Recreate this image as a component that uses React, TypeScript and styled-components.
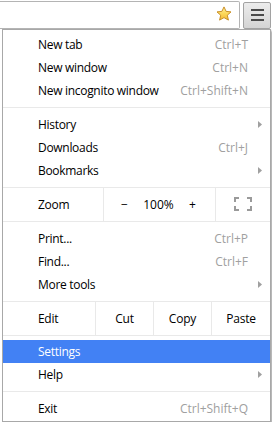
import React from 'react';
import styled, { createGlobalStyle } from 'styled-components';

const GlobalStyle = createGlobalStyle`
	html, body {
		margin: 0;
		padding: 0;
		background: #ffffff;
	}
	body {
		font-family: 'Open Sans', 'Noto Sans', sans-serif;
		font-size: 12px;
		color: #000;
	}
`;

type Item = { label: string; shortcut?: string; submenu?: boolean; active?: boolean };

const groupOne: Item[] = [
	{ label: 'New tab', shortcut: 'Ctrl+T' },
	{ label: 'New window', shortcut: 'Ctrl+N' },
	{ label: 'New incognito window', shortcut: 'Ctrl+Shift+N' }
];

const groupTwo: Item[] = [
	{ label: 'History', submenu: true },
	{ label: 'Downloads', shortcut: 'Ctrl+J' },
	{ label: 'Bookmarks', submenu: true }
];

const groupThree: Item[] = [
	{ label: 'Print...', shortcut: 'Ctrl+P' },
	{ label: 'Find...', shortcut: 'Ctrl+F' },
	{ label: 'More tools', submenu: true }
];

const groupFour: Item[] = [
	{ label: 'Settings', active: true },
	{ label: 'Help', submenu: true }
];

const Star = () => (
	<svg width="16" height="16" viewBox="0 0 16 16">
		<defs>
			<linearGradient id="starFill" x1="0" y1="0" x2="0" y2="1">
				<stop offset="0" stopColor="#fff2a0" />
				<stop offset="0.5" stopColor="#fcd85a" />
				<stop offset="1" stopColor="#f5b935" />
			</linearGradient>
		</defs>
		<path
			d="M8 0.9 L10.1 5.4 L15 5.9 L11.3 9.2 L12.4 14.1 L8 11.6 L3.6 14.1 L4.7 9.2 L1 5.9 L5.9 5.4 Z"
			fill="url(#starFill)"
			stroke="#c98f26"
			strokeWidth="1"
			strokeLinejoin="round"
		/>
	</svg>
);

const FullscreenIcon = () => (
	<svg width="18" height="14" viewBox="0 0 18 14" fill="none" stroke="#9a9a9a" strokeWidth="2">
		<path d="M1 5 V1 H5" />
		<path d="M13 1 H17 V5" />
		<path d="M17 9 V13 H13" />
		<path d="M5 13 H1 V9" />
	</svg>
);

const Arrow = () => (
	<svg width="4" height="7" viewBox="0 0 4 7">
		<path d="M0 0 L4 3.5 L0 7 Z" fill="#a0a0a0" />
	</svg>
);

export default function App() {
	return (
		<>
			<GlobalStyle />
			<Toolbar>
				<AddressBar>
					<Star />
				</AddressBar>
				<MenuButton>
					<Bar />
					<Bar />
					<Bar />
				</MenuButton>
			</Toolbar>
			<Menu>
				{groupOne.map((item) => (
					<MenuRow key={item.label} item={item} />
				))}
				<Separator />
				{groupTwo.map((item) => (
					<MenuRow key={item.label} item={item} />
				))}
				<ButtonRow $after={5}>
					<RowLabel>Zoom</RowLabel>
					<ZoomCell>
						<span>−</span>
						<span>100%</span>
						<span>+</span>
					</ZoomCell>
					<IconCell>
						<FullscreenIcon />
					</IconCell>
				</ButtonRow>
				{groupThree.map((item) => (
					<MenuRow key={item.label} item={item} />
				))}
				<ButtonRow $after={4}>
					<RowLabel $width={93}>Edit</RowLabel>
					<EditCell>Cut</EditCell>
					<EditCell>Copy</EditCell>
					<EditCell $last>Paste</EditCell>
				</ButtonRow>
				{groupFour.map((item) => (
					<MenuRow key={item.label} item={item} />
				))}
				<Separator />
				<MenuRow item={{ label: 'Exit', shortcut: 'Ctrl+Shift+Q' }} />
			</Menu>
		</>
	);
}

const MenuRow: React.FC<{ item: Item }> = ({ item }) => (
	<Row $active={item.active}>
		<Label>{item.label}</Label>
		{item.shortcut && <Shortcut>{item.shortcut}</Shortcut>}
		{item.submenu && (
			<ArrowBox>
				<Arrow />
			</ArrowBox>
		)}
	</Row>
);

const Toolbar = styled.div`
	display: flex;
	align-items: flex-start;
	height: 29px;
	box-sizing: border-box;
	padding-top: 1px;
`;

const AddressBar = styled.div`
	flex: 1;
	height: 28px;
	box-sizing: border-box;
	border: 1px solid #b4b4b4;
	border-left: none;
	border-radius: 0 2px 2px 0;
	background: #ffffff;
	display: flex;
	align-items: center;
	justify-content: flex-end;
	padding-right: 7px;
	padding-bottom: 2px;
`;

const MenuButton = styled.div`
	width: 28px;
	height: 27px;
	margin: 1px 1px 0 3px;
	box-sizing: border-box;
	border: 1px solid #a2a2a2;
	border-radius: 2px;
	background: linear-gradient(#ececec, #d4d4d4);
	display: flex;
	flex-direction: column;
	align-items: center;
	justify-content: center;
	gap: 3px;
	padding-bottom: 1px;
`;

const Bar = styled.div`
	width: 13px;
	height: 2px;
	background: #4a4a4a;
`;

const Menu = styled.div`
	display: flex;
	flex-direction: column;
	margin-left: 2px;
	width: 269px;
	height: 393px;
	box-sizing: border-box;
	border: 1px solid #a8a8a8;
	background: #ffffff;
	padding-top: 3px;
	box-shadow: 2px 2px 2px rgba(0, 0, 0, 0.3);
`;

const Row = styled.div<{ $active?: boolean }>`
	display: flex;
	align-items: center;
	height: 23px;
	flex-shrink: 0;
	padding: 0 22px 0 35px;
	background: ${({ $active }) => ($active ? '#4281f4' : 'transparent')};
	color: ${({ $active }) => ($active ? '#ffffff' : '#000000')};
	position: relative;
`;

const Label = styled.span`
	letter-spacing: -0.3px;
`;

const Shortcut = styled.span`
	margin-left: auto;
	color: #a0a0a0;
`;

const ArrowBox = styled.span`
	position: absolute;
	right: 8px;
	top: 8px;
	display: flex;
`;

const Separator = styled.div`
	height: 1px;
	flex-shrink: 0;
	background: #e9e9e9;
	margin: 5px 0;
`;

const ButtonRow = styled.div<{ $after: number }>`
	display: flex;
	height: 35px;
	flex-shrink: 0;
	box-sizing: border-box;
	border-top: 1px solid #e9e9e9;
	border-bottom: 1px solid #e9e9e9;
	margin: 5px 0 ${({ $after }) => $after}px;
`;

const RowLabel = styled.div<{ $width?: number }>`
	width: ${({ $width }) => $width ?? 101}px;
	box-sizing: border-box;
	padding-left: 35px;
	display: flex;
	align-items: center;
	letter-spacing: -0.3px;
	border-right: 1px solid #e9e9e9;
`;

const ZoomCell = styled.div`
	width: 112px;
	box-sizing: border-box;
	display: flex;
	align-items: center;
	justify-content: space-between;
	padding: 0 19px 0 17px;
	border-right: 1px solid #e9e9e9;
`;

const IconCell = styled.div`
	flex: 1;
	display: flex;
	align-items: center;
	justify-content: center;
	padding-bottom: 1px;
`;

const EditCell = styled.div<{ $last?: boolean }>`
	flex: ${({ $last }) => ($last ? 1 : '0 0 58px')};
	box-sizing: border-box;
	display: flex;
	align-items: center;
	justify-content: center;
	letter-spacing: -0.2px;
	border-right: ${({ $last }) => ($last ? 'none' : '1px solid #e9e9e9')};
`;
